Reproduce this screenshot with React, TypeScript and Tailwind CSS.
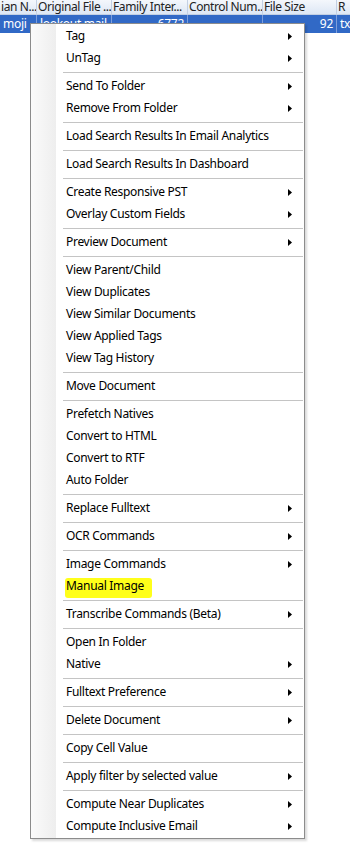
import type { ReactNode } from 'react'

type Entry = { label: string; sub?: boolean; mark?: boolean } | 'sep'

const menu: Entry[] = [
  { label: 'Tag', sub: true },
  { label: 'UnTag', sub: true },
  'sep',
  { label: 'Send To Folder', sub: true },
  { label: 'Remove From Folder', sub: true },
  'sep',
  { label: 'Load Search Results In Email Analytics' },
  'sep',
  { label: 'Load Search Results In Dashboard' },
  'sep',
  { label: 'Create Responsive PST', sub: true },
  { label: 'Overlay Custom Fields', sub: true },
  'sep',
  { label: 'Preview Document', sub: true },
  'sep',
  { label: 'View Parent/Child' },
  { label: 'View Duplicates' },
  { label: 'View Similar Documents' },
  { label: 'View Applied Tags' },
  { label: 'View Tag History' },
  'sep',
  { label: 'Move Document' },
  'sep',
  { label: 'Prefetch Natives' },
  { label: 'Convert to HTML' },
  { label: 'Convert to RTF' },
  { label: 'Auto Folder' },
  'sep',
  { label: 'Replace Fulltext', sub: true },
  'sep',
  { label: 'OCR Commands', sub: true },
  'sep',
  { label: 'Image Commands', sub: true },
  { label: 'Manual Image', mark: true },
  'sep',
  { label: 'Transcribe Commands (Beta)', sub: true },
  'sep',
  { label: 'Open In Folder' },
  { label: 'Native', sub: true },
  'sep',
  { label: 'Fulltext Preference', sub: true },
  'sep',
  { label: 'Delete Document', sub: true },
  'sep',
  { label: 'Copy Cell Value' },
  'sep',
  { label: 'Apply filter by selected value', sub: true },
  'sep',
  { label: 'Compute Near Duplicates', sub: true },
  { label: 'Compute Inclusive Email', sub: true },
]

// grid columns behind the menu (scrolled, so the first one is cut)
const cols = [
  { w: 'w-[37px]', head: 'ian N...', cell: 'moji', right: false },
  { w: 'w-[75px]', head: 'Original File ...', cell: 'lookout mail', right: false },
  { w: 'w-[76px]', head: 'Family Inter...', cell: '6772', right: true },
  { w: 'w-[75px]', head: 'Control Num...', cell: '', right: false },
  { w: 'w-[74px]', head: 'File Size', cell: '92', right: true },
  { w: 'w-[20px]', head: 'R', cell: 'txt', right: false },
]

function Arrow() {
  return (
    <svg width="4" height="7" viewBox="0 0 4 7" className="absolute right-[12px] top-[8px]">
      <path d="M0 0 L4 3.5 L0 7 Z" fill="#000" />
    </svg>
  )
}

function Item({ children, sub, mark }: { children: ReactNode; sub?: boolean; mark?: boolean }) {
  return (
    <div className="relative h-[22px] flex items-center pl-[35px]">
      {mark && <div className="absolute left-[34px] top-[3px] w-[87px] h-[20px] bg-[#ffff1a] rounded-[3px]" />}
      <span className="relative">{children}</span>
      {sub && <Arrow />}
    </div>
  )
}

export default function App() {
  return (
    <div className="relative w-[350px] h-[859px] bg-white overflow-hidden font-['Noto_Sans',sans-serif] text-[12px] tracking-[-0.3px] text-black">
      {/* grid header */}
      <div className="flex h-[15px] bg-gradient-to-b from-[#f4f7fc] to-[#dde7f5] border-b border-[#c3d0e3] text-[#222] leading-[14px] tracking-[-0.4px]">
        {cols.map((c, i) => (
          <div key={i} className={`${c.w} shrink-0 border-r border-[#c3d0e3] pl-[1px] overflow-hidden whitespace-nowrap`}>
            {c.head}
          </div>
        ))}
      </div>
      {/* selected row */}
      <div className="flex h-[18px] bg-[#3169c6] text-white leading-[18px]">
        {cols.map((c, i) => (
          <div
            key={i}
            className={`${c.w} shrink-0 border-r border-[#7d9edb] px-[3px] overflow-hidden whitespace-nowrap ${c.right ? 'text-right' : ''}`}
          >
            {c.cell}
          </div>
        ))}
      </div>

      {/* context menu */}
      <div className="absolute left-[30px] top-[23px] w-[275px] bg-white border border-[#8c8c8c] py-[1px] shadow-[2px_2px_2px_rgba(0,0,0,0.15)]">
        <div className="absolute left-0 top-0 bottom-0 w-[25px] bg-gradient-to-r from-[#fbfbfb] to-[#eeeeee]" />
        <div className="relative">
          {menu.map((e, i) =>
            e === 'sep' ? (
              <div key={i} className="h-[6px] flex items-center pl-[32px] pr-[1px]">
                <div className="h-px w-full bg-[#c4c4c4]" />
              </div>
            ) : (
              <Item key={i} sub={e.sub} mark={e.mark}>
                {e.label}
              </Item>
            )
          )}
        </div>
      </div>
    </div>
  )
}
